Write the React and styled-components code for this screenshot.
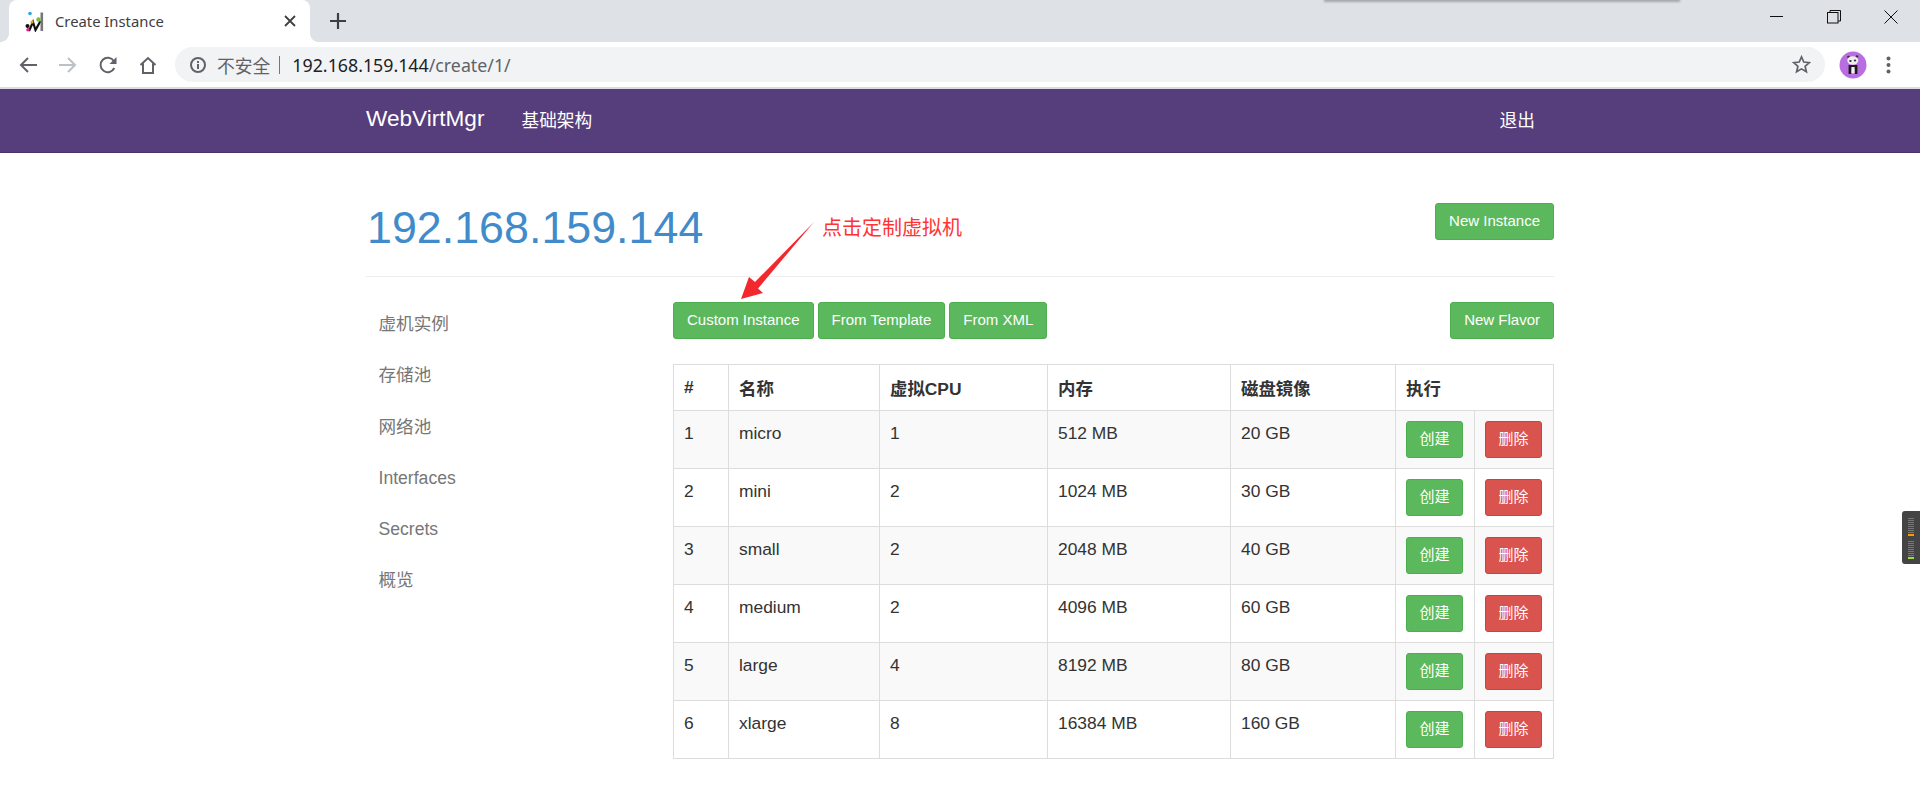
import React from "react";
import styled, { createGlobalStyle } from "styled-components";

const Global = createGlobalStyle`
  html, body { margin: 0; padding: 0; height: 100%; background: #fff; overflow: hidden; }
  body { font-family: "Liberation Sans", "Noto Sans CJK SC", sans-serif; font-size: 17.4px; color: #333; }
  * { box-sizing: border-box; }
`;

const Page = styled.div`position: relative; height: 796px; overflow: hidden;`;

const TabStrip = styled.div`position: relative; display: flex; align-items: flex-end; height: 42px; padding-left: 9px; background: #dee1e6;`;
const StripShadow = styled.div`position: absolute; left: 1324px; top: -3px; width: 356px; height: 5px; background: #a4a8ad; filter: blur(1.2px);`;
const Tab = styled.div`
  position: relative; display: flex; align-items: center; width: 301px; height: 42px; padding: 0 14px 0 16px;
  background: #fff; border-radius: 8px 8px 0 0;
  &::before, &::after { content: ""; position: absolute; bottom: 0; width: 8px; height: 8px; background: radial-gradient(circle at var(--c) 0, #dee1e6 7.5px, #fff 8px); }
  &::before { left: -8px; --c: 0; }
  &::after { right: -8px; --c: 100%; }
`;
const TabTitle = styled.span`margin-left: 9px; font: 14.8px "Noto Sans", sans-serif; color: #3c4043; flex: 1; white-space: nowrap;`;
const NewTab = styled.div`display: flex; margin: 0 0 13px 20px;`;
const WindowControls = styled.div`display: flex; align-items: center; gap: 43px; margin: 0 22px 18px auto;`;

const Toolbar = styled.div`display: flex; align-items: center; height: 45px; padding: 0 0 0 19px; background: #fff;`;
const NavIcons = styled.div`display: flex; align-items: center; gap: 22px; margin-right: 18px;`;
const Omnibox = styled.div`display: flex; align-items: center; width: 1650px; height: 35px; padding: 0 14px 0 15px; border-radius: 18px; background: #f1f3f4;`;
const Security = styled.span`margin-left: 11px; font-size: 17.8px; color: #5f6368; font-family: "Noto Sans CJK SC", sans-serif;`;
const Divider = styled.span`width: 1px; height: 18px; margin: 0 12px 0 9px; background: #777;`;
const Url = styled.span`flex: 1; font: 17.8px "Noto Sans", sans-serif; color: #5f6368; & b { font-weight: 400; color: #202124; }`;
const Avatar = styled.div`display: flex; margin: 0 19px 0 14px;`;
const Dots = styled.div`display: flex;`;
const Separator = styled.div`height: 2px; background: #dadce0;`;

const Navbar = styled.nav`height: 64px; background: #563d7c; border-bottom: 1px solid #4a336e;`;
const NavInner = styled.div`display: flex; align-items: center; width: 1188px; height: 60px; margin: 0 auto; color: #fff; padding-right: 19px;`;
const Brand = styled.a`font-size: 22.6px; margin-right: 37px;`;
const NavLink = styled.a`font-size: 17.7px; &:last-child { margin-left: auto; }`;

const Container = styled.main`width: 1188px; margin: 0 auto;`;
const Header = styled.header`display: flex; justify-content: space-between; align-items: flex-start; height: 124px; padding-top: 50px; border-bottom: 1px solid #eee;`;
const Title = styled.h1`margin: 0 0 0 1px; font-size: 44.8px; font-weight: 400; line-height: 48px; color: #428bca;`;
const Columns = styled.div`display: grid; grid-template-columns: 307px 881px;`;
const SideNav = styled.ul`list-style: none; margin: 0; padding: 22px 0 0 12.5px;`;
const SideItem = styled.li`height: 51.3px; line-height: 51.3px; font-size: 17.6px; color: #777;`;
const Main = styled.section`padding-top: 25px;`;
const Actions = styled.div`display: flex; gap: 4px; height: 62px;`;
const Flavor = styled.div`margin-left: auto;`;

const Button = styled.button`
  height: 37px; padding: 0 13px 3px; border: 1px solid ${p => p.$danger ? "#d43f3a" : "#4cae4c"}; border-radius: 3px;
  background: ${p => p.$danger ? "#d9534f" : "#5cb85c"}; color: #fff; font: 15px "Liberation Sans", "Noto Sans CJK SC", sans-serif; white-space: nowrap;
`;
const RowButton = styled(Button)`width: 57px; padding: 0 0 5px; display: block;`;

const Table = styled.table`width: 880px; table-layout: fixed; border-collapse: collapse; font-size: 17.4px;`;
const Th = styled.th`height: 46px; padding: 0 10px; text-align: left; font-weight: 700; border: 1px solid #ddd;`;
const Row = styled.tr`background: ${p => p.$odd ? "#f9f9f9" : "#fff"};`;
const Td = styled.td`height: 57.85px; padding: 10px; vertical-align: top; line-height: 24px; border: 1px solid #ddd;`;

const Callout = styled.div`position: absolute; left: 822px; top: 213px; font: 20px "Noto Sans CJK SC", sans-serif; line-height: 28px; color: #f33;`;
const ArrowSvg = styled.svg`position: absolute; left: 730px; top: 215px;`;
const SideWidget = styled.div`
  position: absolute; right: 0; top: 511px; width: 18px; height: 53px; padding: 7px 0 0 6px; background: #444; border-radius: 3px 0 0 3px;
  display: flex; flex-direction: column; gap: 1px;
`;
const Tick = styled.i`display: block; flex: none; width: 6px; height: ${p => p.$c ? 2 : 1}px; background: ${p => p.$c || "#777"}; margin-bottom: ${p => p.$gap || 0}px;`;

const Back = ({ c = "#5f6368" }) => (
  <svg width="18" height="16" viewBox="0 0 18 16" fill="none" stroke={c} strokeWidth="2"><path d="M18 8H2M9 1L2 8l7 7" /></svg>
);
const Forward = () => (
  <svg width="18" height="16" viewBox="0 0 18 16" fill="none" stroke="#bdc1c6" strokeWidth="2"><path d="M0 8h16M9 1l7 7-7 7" /></svg>
);
const Reload = () => (
  <svg width="18" height="18" viewBox="0 0 18 18" fill="none"><path d="M15.3 12a7.2 7.2 0 1 1-.5-7" stroke="#5f6368" strokeWidth="2" /><path d="M17.5 1v7h-7z" fill="#5f6368" /></svg>
);
const Home = () => (
  <svg width="18" height="18" viewBox="0 0 18 18" fill="none" stroke="#5f6368" strokeWidth="2"><path d="M1.5 9L9 2l7.5 7M4 7.5V17h10V7.5" /></svg>
);
const Info = () => (
  <svg width="16" height="16" viewBox="0 0 16 16" fill="none"><circle cx="8" cy="8" r="7" stroke="#5f6368" strokeWidth="2" /><path d="M8 7v5M8 4v2" stroke="#5f6368" strokeWidth="2" /></svg>
);
const Star = () => (
  <svg width="19" height="19" viewBox="0 0 20 20" fill="none" stroke="#5f6368" strokeWidth="1.8" style={{ flex: "none" }}><path d="M10 2l2.4 5.4 5.8.6-4.4 3.9 1.3 5.7-5.1-3-5.1 3 1.3-5.7L1.8 8l5.8-.6z" /></svg>
);
const CloseTab = () => (
  <svg width="12" height="12" viewBox="0 0 12 12" stroke="#3c4043" strokeWidth="1.8"><path d="M1 1l10 10M11 1L1 11" /></svg>
);
const Plus = () => (
  <svg width="16" height="16" viewBox="0 0 16 16" stroke="#3c4043" strokeWidth="2.2"><path d="M8 0v16M0 8h16" /></svg>
);
const Favicon = () => (
  <svg width="21" height="21" viewBox="0 0 21 21" style={{ flex: "none" }}>
    <path d="M4 20L8 11l2.5 8 5-9" fill="none" stroke="#111" strokeWidth="2.2" />
    <path d="M15.5 1.5h2.6V20h-2.6z" fill="#777" />
    <circle cx="5" cy="2.5" r="1.8" fill="#29a8e0" />
    <circle cx="13.5" cy="8.5" r="2.2" fill="#77c13a" />
    <circle cx="2.5" cy="15" r="2" fill="#111" />
    <circle cx="3" cy="18.8" r="1.7" fill="#e0208a" />
    <circle cx="7" cy="11" r="1.6" fill="#f2a11c" />
  </svg>
);
const Panda = () => (
  <svg width="28" height="28" viewBox="0 0 28 28">
    <circle cx="14" cy="14" r="13.5" fill="#b86ee0" />
    <circle cx="9.5" cy="6" r="1.3" fill="#333" /><circle cx="18" cy="5.5" r="1.3" fill="#333" />
    <ellipse cx="13.8" cy="9.5" rx="5.5" ry="4.2" fill="#eee" />
    <ellipse cx="11.4" cy="10" rx="1.3" ry="1" fill="#333" /><ellipse cx="16" cy="9.6" rx="1.2" ry="1" fill="#333" />
    <path d="M9.6 14h8.8v9h-2.8v-5h-3.2v5H9.6z" fill="#1c1c1c" />
    <rect x="12.4" y="16" width="3.2" height="6.4" fill="#f0f0f0" />
  </svg>
);
const MenuDots = () => (
  <svg width="5" height="18" viewBox="0 0 5 18" fill="#5f6368"><circle cx="2.5" cy="2.5" r="2" /><circle cx="2.5" cy="9" r="2" /><circle cx="2.5" cy="15.5" r="2" /></svg>
);
const Minimize = () => <svg width="14" height="14" viewBox="0 0 14 14" stroke="#111" strokeWidth="1"><path d="M0 6.5h13" /></svg>;
const Restore = () => (
  <svg width="14" height="14" viewBox="0 0 14 14" fill="none" stroke="#111" strokeWidth="1"><rect x="0.5" y="2.5" width="10.5" height="10.5" /><path d="M3 2.5V.5h10.5V11h-2.5" /></svg>
);
const CloseWin = () => <svg width="14" height="14" viewBox="0 0 14 14" stroke="#111" strokeWidth="1"><path d="M.5.5l13 13M13.5.5l-13 13" /></svg>;

const flavors = [
  [1, "micro", 1, "512 MB", "20 GB"],
  [2, "mini", 2, "1024 MB", "30 GB"],
  [3, "small", 2, "2048 MB", "40 GB"],
  [4, "medium", 2, "4096 MB", "60 GB"],
  [5, "large", 4, "8192 MB", "80 GB"],
  [6, "xlarge", 8, "16384 MB", "160 GB"],
];
const menu = ["虚机实例", "存储池", "网络池", "Interfaces", "Secrets", "概览"];
const widths = [55, 151, 168, 183, 165, 79, 79];

export default function App() {
  return (
    <Page>
      <Global />
      <TabStrip>
        <StripShadow />
        <Tab>
          <Favicon />
          <TabTitle>Create Instance</TabTitle>
          <CloseTab />
        </Tab>
        <NewTab><Plus /></NewTab>
        <WindowControls><Minimize /><Restore /><CloseWin /></WindowControls>
      </TabStrip>
      <Toolbar>
        <NavIcons><Back /><Forward /><Reload /><Home /></NavIcons>
        <Omnibox>
          <Info />
          <Security>不安全</Security>
          <Divider />
          <Url><b>192.168.159.144</b>/create/1/</Url>
          <Star />
        </Omnibox>
        <Avatar><Panda /></Avatar>
        <Dots><MenuDots /></Dots>
      </Toolbar>
      <Separator />
      <Navbar>
        <NavInner>
          <Brand>WebVirtMgr</Brand>
          <NavLink>基础架构</NavLink>
          <NavLink>退出</NavLink>
        </NavInner>
      </Navbar>
      <Container>
        <Header>
          <Title>192.168.159.144</Title>
          <Button>New Instance</Button>
        </Header>
        <Columns>
          <SideNav>
            {menu.map(m => <SideItem key={m}>{m}</SideItem>)}
          </SideNav>
          <Main>
            <Actions>
              <Button>Custom Instance</Button>
              <Button>From Template</Button>
              <Button>From XML</Button>
              <Flavor><Button>New Flavor</Button></Flavor>
            </Actions>
            <Table>
              <colgroup>{widths.map((w, i) => <col key={i} style={{ width: w }} />)}</colgroup>
              <thead>
                <tr>
                  <Th>#</Th><Th>名称</Th><Th>虚拟CPU</Th><Th>内存</Th><Th>磁盘镜像</Th><Th colSpan={2}>执行</Th>
                </tr>
              </thead>
              <tbody>
                {flavors.map((f, i) => (
                  <Row key={f[0]} $odd={i % 2 === 0}>
                    {f.map((v, j) => <Td key={j}>{v}</Td>)}
                    <Td><RowButton>创建</RowButton></Td>
                    <Td><RowButton $danger>删除</RowButton></Td>
                  </Row>
                ))}
              </tbody>
            </Table>
          </Main>
        </Columns>
      </Container>
      <ArrowSvg width="90" height="90" viewBox="0 0 90 90">
        <path d="M84 7L28 73.5 33 78 11 84 19 62 25 67z" fill="#f3282d" />
      </ArrowSvg>
      <Callout>点击定制虚拟机</Callout>
      <SideWidget>
        {Array.from({ length: 8 }).map((_, i) => <Tick key={"a" + i} />)}
        <Tick $c="#f90" $gap={4} />
        {Array.from({ length: 8 }).map((_, i) => <Tick key={"b" + i} />)}
        <Tick $c="#9d4" />
      </SideWidget>
    </Page>
  );
}
